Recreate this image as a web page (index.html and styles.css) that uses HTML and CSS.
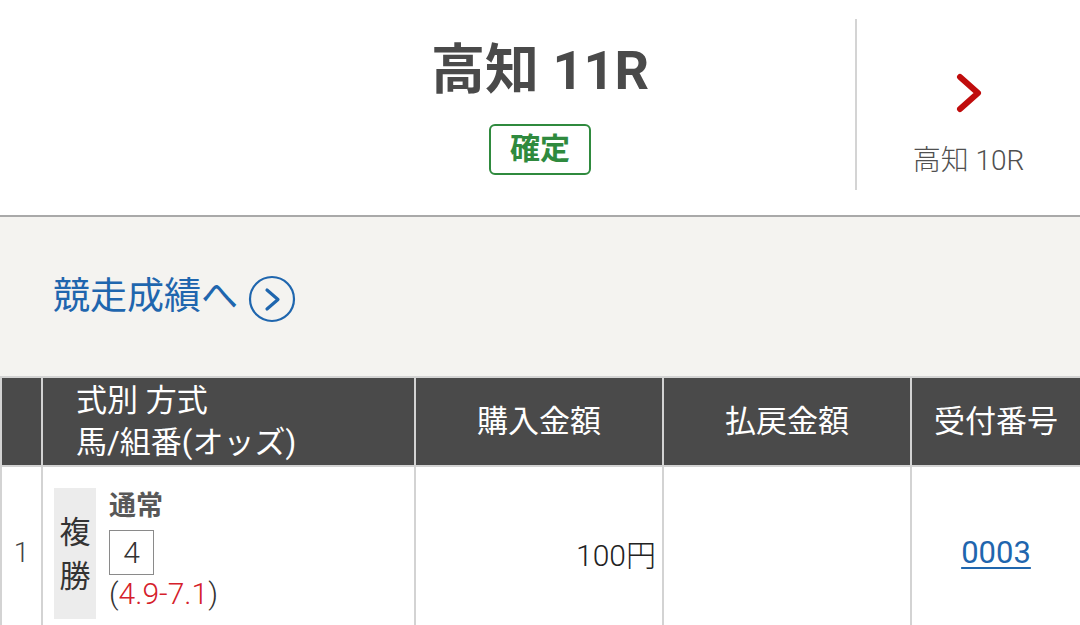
FILE: index.html
```html
<!DOCTYPE html>
<html lang="ja">
<head>
<meta charset="utf-8">
<title>高知 11R</title>
<link rel="stylesheet" href="styles.css">
</head>
<body>
<header class="top">
  <div class="race">
    <h1 class="race-title">高知 11R</h1>
    <span class="status">確定</span>
  </div>
  <a class="prev" href="#">
    <svg class="prev-icon" width="30" height="40" viewBox="0 0 30 40" aria-hidden="true">
      <polyline points="6,4 24,20 6,36" fill="none" stroke="#c00d0d" stroke-width="6" stroke-linecap="round" stroke-linejoin="round"/>
    </svg>
    <span class="prev-label">高知 10R</span>
  </a>
</header>
<section class="band">
  <a class="result-link" href="#">
    <span>競走成績へ</span>
    <svg class="circle-icon" width="48" height="48" viewBox="0 0 48 48" aria-hidden="true">
      <circle cx="24" cy="24" r="22" fill="none" stroke="#1f66ae" stroke-width="2.2"/>
      <polyline points="19,15 30,24.5 19,34" fill="none" stroke="#1f66ae" stroke-width="3.2" stroke-linecap="round" stroke-linejoin="round"/>
    </svg>
  </a>
</section>
<div class="grid">
  <div class="th"></div>
  <div class="th th-left">式別 方式<br>馬/組番(オッズ)</div>
  <div class="th">購入金額</div>
  <div class="th">払戻金額</div>
  <div class="th">受付番号</div>

  <div class="td td-no">1</div>
  <div class="td td-bet">
    <div class="bet-type">複<br>勝</div>
    <div class="bet-info">
      <div class="method">通常</div>
      <div class="horse">4</div>
      <div class="odds">(<span class="odds-num">4.9-7.1</span>)</div>
    </div>
  </div>
  <div class="td td-amount">100円</div>
  <div class="td"></div>
  <div class="td td-ticket"><a href="#">0003</a></div>
</div>
</body>
</html>
```
FILE: styles.css
```css
* { box-sizing: border-box; }
html, body { margin: 0; padding: 0; }
body {
  width: 1080px;
  height: 625px;
  overflow: hidden;
  background: #ffffff;
  font-family: Roboto, "Noto Sans CJK JP", sans-serif;
  color: #333;
}

.top {
  display: grid;
  grid-template-columns: 1fr 225px;
  padding-left: 225px;
  height: 217px;
  border-bottom: 2px solid #a9a9a9;
}
.race {
  display: flex;
  flex-direction: column;
  align-items: center;
  padding-top: 35px;
}
.race-title {
  margin: 0;
  font-size: 54px;
  line-height: 72px;
  font-weight: 700;
  color: #4a4a4a;
}
.status {
  margin-top: 17px;
  padding: 0 19px;
  height: 51px;
  line-height: 46px;
  border: 2px solid #2f8a3e;
  border-radius: 6px;
  color: #2f8a3e;
  font-size: 30px;
  font-weight: 700;
}
.prev {
  align-self: start;
  margin-top: 19px;
  height: 171px;
  border-left: 2px solid #d4d4d4;
  display: flex;
  flex-direction: column;
  align-items: center;
  padding-top: 54px;
  text-decoration: none;
}
.prev-icon { display: block; }
.prev-label {
  margin-top: 28px;
  font-size: 28px;
  line-height: 40px;
  font-weight: 300;
  color: #505050;
}

.band {
  height: 159px;
  background: #f4f3f0;
  display: flex;
  align-items: center;
  padding-left: 53px;
}
.result-link {
  display: flex;
  align-items: center;
  gap: 10px;
  color: #1f66ae;
  text-decoration: none;
  font-size: 37px;
  line-height: 48px;
}
.circle-icon { display: block; margin-top: 4px; }

.grid {
  display: grid;
  grid-template-columns: 39px 371px 246px 246px 1fr;
  grid-template-rows: 87px 175px;
  gap: 2px;
  padding: 2px 0 0 2px;
  background: #d3d3d3;
}
.th {
  background: #4a4a4a;
  color: #ffffff;
  font-size: 31px;
  line-height: 42px;
  display: flex;
  align-items: center;
  justify-content: center;
}
.th-left {
  justify-content: flex-start;
  padding-left: 33px;
}
.td {
  background: #ffffff;
  font-size: 28px;
  font-weight: 300;
  color: #222;
}
.td-no {
  display: flex;
  align-items: center;
  justify-content: center;
  color: #444;
  padding-bottom: 4px;
}
.td-bet {
  display: flex;
  align-items: flex-start;
  gap: 13px;
  padding: 21px 0 0 11px;
}
.bet-type {
  width: 42px;
  height: 131px;
  background: #ececec;
  display: flex;
  align-items: center;
  justify-content: center;
  text-align: center;
  font-size: 31px;
  line-height: 44px;
  font-weight: 400;
  color: #333;
  padding-top: 2px;
}
.bet-info {
  display: flex;
  flex-direction: column;
  align-items: flex-start;
}
.method {
  font-size: 27px;
  line-height: 36px;
  font-weight: 700;
  color: #585858;
}
.horse {
  margin-top: 6px;
  width: 45px;
  height: 45px;
  border: 1px solid #8a8a8a;
  display: flex;
  align-items: center;
  justify-content: center;
  font-size: 30px;
  color: #333;
}
.odds {
  font-size: 30px;
  line-height: 38px;
  color: #333;
}
.odds-num { color: #d5202a; font-weight: 300; }
.td-amount {
  display: flex;
  align-items: center;
  justify-content: flex-end;
  padding-right: 6px;
  padding-bottom: 4px;
  font-size: 30px;
}
.td-ticket {
  display: flex;
  align-items: center;
  justify-content: center;
  padding-bottom: 4px;
}
.td-ticket a {
  color: #1f66ae;
  font-size: 31px;
  font-weight: 400;
  text-decoration: underline;
  text-decoration-thickness: 2px;
  text-underline-offset: 4px;
}
```
